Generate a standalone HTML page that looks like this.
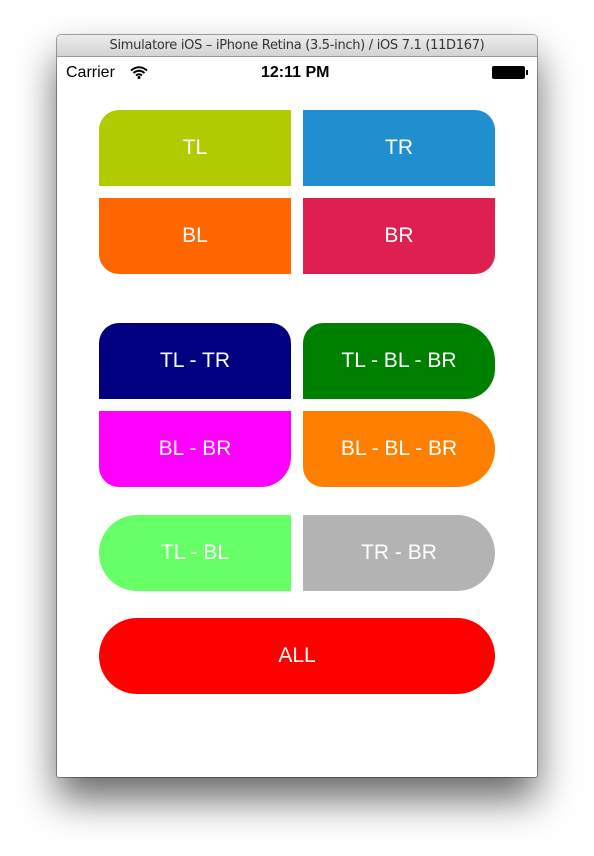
<!DOCTYPE html><html><head><style>
body{margin:0;width:594px;height:856px;background:#fff;position:relative;overflow:hidden;font-family:"Liberation Sans",sans-serif}
.win{position:absolute;left:57px;top:35px;width:480px;height:742px;background:#fff;border-radius:4px 4px 2px 2px;box-shadow:0 22px 40px rgba(0,0,0,.6),0 0 0 1px rgba(0,0,0,.35)}
.tb{height:21px;background:linear-gradient(#ececec,#d3d3d3);border-bottom:1px solid #999;border-radius:4px 4px 0 0;text-align:center;font-size:13px;line-height:22px;color:#333;font-family:"DejaVu Sans",sans-serif;letter-spacing:-.3px}
.b{position:absolute;width:192px;height:76px;color:#fff;font-size:21px;text-align:center;line-height:76px}
.st{position:absolute;top:64px;font-size:16px;color:#000}
</style></head><body>
<div class="win"><div class="tb">Simulatore iOS – iPhone Retina (3.5-inch) / iOS 7.1 (11D167)</div></div>
<div class="st" style="left:66px">Carrier</div>
<svg style="position:absolute;left:130px;top:66px" width="18" height="13" viewBox="0 0 18 13"><path d="M1 4.5Q9-2 17 4.5M3.5 7Q9 2.5 14.5 7M6 9.5Q9 7 12 9.5" stroke="#000" stroke-width="2" fill="none"/><circle cx="9" cy="11.5" r="1.5"/></svg>
<div class="st" style="left:261px;font-weight:bold">12:11 PM</div>
<div style="position:absolute;left:492px;top:66px;width:31px;height:11px;background:#000;border:1px solid #000;border-radius:2px"></div>
<div style="position:absolute;left:526px;top:70px;width:2px;height:5px;background:#000"></div>
<div class="b" style="left:99px;top:110px;background:#b0cb00;border-top-left-radius:20px">TL</div>
<div class="b" style="left:303px;top:110px;background:#208fd0;border-top-right-radius:20px">TR</div>
<div class="b" style="left:99px;top:198px;background:#ff6600;border-bottom-left-radius:20px">BL</div>
<div class="b" style="left:303px;top:198px;background:#dd2050;border-bottom-right-radius:20px">BR</div>
<div class="b" style="left:99px;top:323px;background:#000080;border-radius:20px 20px 0 0">TL - TR</div>
<div class="b" style="left:303px;top:323px;background:#008000;border-radius:20px 38px 30px 0">TL - BL - BR</div>
<div class="b" style="left:99px;top:411px;background:#ff00ff;border-radius:0 0 30px 20px">BL - BR</div>
<div class="b" style="left:303px;top:411px;background:#ff8000;border-radius:0 38px 38px 20px">BL - BL - BR</div>
<div class="b" style="left:99px;top:515px;background:#66ff66;border-radius:38px 0 0 38px">TL - BL</div>
<div class="b" style="left:303px;top:515px;background:#b3b3b3;border-radius:0 38px 38px 0">TR - BR</div>
<div class="b" style="left:99px;top:618px;width:396px;background:#ff0000;border-radius:38px">ALL</div>
</body></html>
